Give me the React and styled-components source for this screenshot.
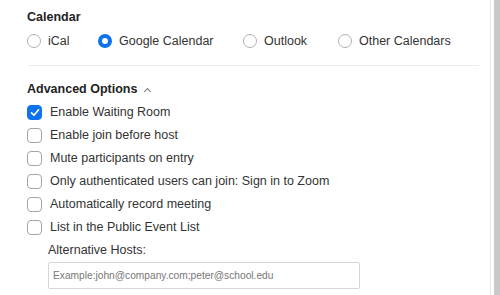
import React from "react";
import styled, { createGlobalStyle } from "styled-components";

const Global = createGlobalStyle`
  html, body { margin: 0; padding: 0; background: #fff; }
  body { font-family: "Liberation Sans", Arial, sans-serif; color: #333; }
`;

const Page = styled.div`
  display: flex;
  width: 500px;
  height: 295px;
  overflow: hidden;
`;

const Panel = styled.div`
  width: 491px;
  border-right: 1px solid #e8e8e8;
  padding: 9px 0 0 27px;
  box-sizing: border-box;
`;

const Gutter = styled.div`
  width: 3px;
  background: #fff;
`;

const Scrollbar = styled.div`
  flex: 1;
  background: #c9c9c9;
`;

const Title = styled.div`
  font-size: 12.5px;
  font-weight: bold;
  color: #232323;
  line-height: 16px;
  display: flex;
  align-items: center;
  gap: 8px;
`;

const RadioRow = styled.div`
  display: flex;
  align-items: center;
  margin-top: 8px;
  height: 16px;
`;

const RadioItem = styled.label`
  display: flex;
  align-items: center;
  gap: 7px;
  font-size: 12.5px;
  color: #333;
  width: ${(p) => p.w}px;
`;

const RadioCircle = styled.span`
  box-sizing: border-box;
  width: 14px;
  height: 14px;
  border-radius: 50%;
  border: ${(p) => (p.checked ? "4px solid #0e72ed" : "1px solid #b0b0b0")};
  background: #fff;
  flex: none;
`;

const Divider = styled.div`
  height: 1px;
  background: #ececec;
  margin: 16px 11px 0 1px;
`;

const Section = styled.div`
  margin-top: 15px;
`;

const Caret = styled.span`
  display: inline-block;
  width: 4px;
  height: 4px;
  border-left: 1.2px solid #777;
  border-top: 1.2px solid #777;
  transform: rotate(45deg);
  margin-top: 4px;
`;

const CheckList = styled.div`
  display: flex;
  flex-direction: column;
  gap: 7px;
  margin-top: 7px;
`;

const CheckRow = styled.label`
  display: flex;
  align-items: center;
  gap: 8px;
  font-size: 12.5px;
  color: #333;
  height: 16px;
`;

const Box = styled.span`
  box-sizing: border-box;
  width: 15px;
  height: 15px;
  border-radius: 4px;
  border: 1px solid ${(p) => (p.checked ? "#0e72ed" : "#a4a4a4")};
  background: ${(p) => (p.checked ? "#0e72ed" : "#fff")};
  display: flex;
  align-items: center;
  justify-content: center;
  flex: none;
`;

const HostBlock = styled.div`
  margin: 8px 0 0 21px;
`;

const HostLabel = styled.div`
  font-size: 12.5px;
  color: #333;
  line-height: 14px;
`;

const HostInput = styled.div`
  margin-top: 5px;
  width: 312px;
  height: 27px;
  box-sizing: border-box;
  border: 1px solid #d6d6d6;
  border-radius: 2px;
  font-size: 10.2px;
  color: #777;
  display: flex;
  align-items: center;
  padding-left: 4px;
`;

const radios = [
  { label: "iCal", w: 71 },
  { label: "Google Calendar", w: 145, checked: true },
  { label: "Outlook", w: 95 },
  { label: "Other Calendars", w: 130 },
];

const checks = [
  { label: "Enable Waiting Room", checked: true },
  { label: "Enable join before host" },
  { label: "Mute participants on entry" },
  { label: "Only authenticated users can join: Sign in to Zoom" },
  { label: "Automatically record meeting" },
  { label: "List in the Public Event List" },
];

export default function App() {
  return (
    <>
      <Global />
      <Page>
        <Panel>
          <Title>Calendar</Title>
          <RadioRow>
            {radios.map((r) => (
              <RadioItem key={r.label} w={r.w}>
                <RadioCircle checked={r.checked} />
                {r.label}
              </RadioItem>
            ))}
          </RadioRow>
          <Divider />
          <Section>
            <Title>
              Advanced Options <Caret />
            </Title>
            <CheckList>
              {checks.map((c) => (
                <CheckRow key={c.label}>
                  <Box checked={c.checked}>
                    {c.checked && (
                      <svg width="10" height="9" viewBox="0 0 10 9">
                        <path d="M1.5 4.8 L4 7.2 L8.6 1.8" fill="none" stroke="#fff" strokeWidth="1.7" strokeLinecap="round" strokeLinejoin="round" />
                      </svg>
                    )}
                  </Box>
                  {c.label}
                </CheckRow>
              ))}
            </CheckList>
            <HostBlock>
              <HostLabel>Alternative Hosts:</HostLabel>
              <HostInput>Example:john@company.com;peter@school.edu</HostInput>
            </HostBlock>
          </Section>
        </Panel>
        <Gutter />
        <Scrollbar />
      </Page>
    </>
  );
}
